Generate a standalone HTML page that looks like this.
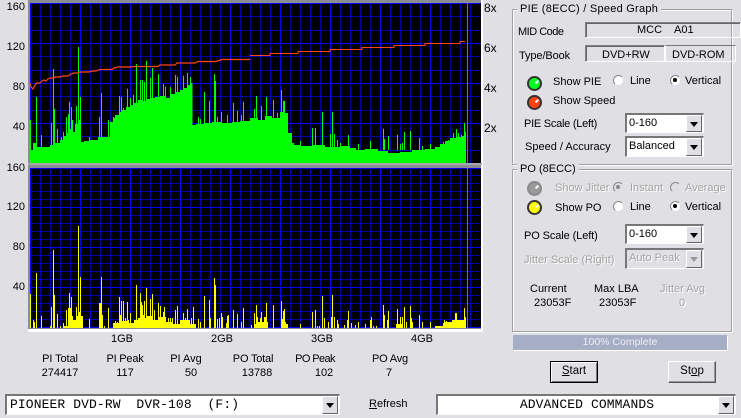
<!DOCTYPE html>
<html><head><meta charset="utf-8"><style>
html,body{margin:0;padding:0}
body{width:741px;height:418px;overflow:hidden;background:#e0dfe3;position:relative;font-family:"Liberation Sans",Arial,sans-serif;font-size:11px;color:#000}
.t{position:absolute;white-space:pre;line-height:14px;height:14px}
.c{transform:translateX(-50%)}
.d{color:#a3a3a3;text-shadow:1px 1px 0 #fff}
.ax{font-size:11px;text-align:right;width:24px;left:1px}
.gb{position:absolute;border:1px solid #a0a0a4;box-shadow:1px 1px 0 #fff,inset 1px 1px 0 #fff}
.lg{position:absolute;background:#e0dfe3;padding:0 3px;line-height:14px;white-space:pre}
.f{position:absolute;border:1px solid;border-color:#808080 #fff #fff #808080;box-shadow:inset 1px 1px 0 #666;box-sizing:border-box}
.sel{position:absolute;background:#fff;box-sizing:border-box;border-top:2px solid #777;border-left:2px solid #777;border-right:1px solid #fff;border-bottom:1px solid #fff;padding-left:2px;line-height:17px;font-size:11px}
.sel.dis{background:#e0dfe3;color:#a3a3a3;text-shadow:1px 1px 0 #fff}
.btn{position:absolute;box-sizing:border-box;background:#e0dfe3;border:1px solid;border-color:#fff #666 #666 #fff;right:1px;top:0;bottom:0;width:16px}
.btn:after{content:"";position:absolute;left:3px;top:6px;border:4px solid transparent;border-top:5px solid #000;border-bottom:0}
.dis .btn:after{border-top-color:#999}
.led{position:absolute;width:15px;height:15px;box-sizing:border-box;border-radius:50%;border:2px solid #333}
.led:after{content:"";position:absolute;left:6px;top:3px;width:4px;height:2px;background:#fff;transform:rotate(-45deg)}
.r{position:absolute;width:11px;height:11px;box-sizing:border-box;border-radius:50%;background:#fff;border:1px solid;border-color:#888 #e0dfe3 #e0dfe3 #888}
.r.on:after{content:"";position:absolute;left:2px;top:2px;width:4px;height:4px;border-radius:50%;background:#000}
.r.dm{background:#e0dfe3}
.r.dm.on:after{background:#888}
.b{position:absolute;box-sizing:border-box;background:#e0dfe3;text-align:center;font-size:11.5px;line-height:19px;border:1px solid;border-color:#fff #555 #555 #fff}
u{text-decoration:underline}
</style></head><body>
<svg width="483" height="332" style="position:absolute;left:0;top:0" xmlns="http://www.w3.org/2000/svg">
<rect x="28" y="0" width="455" height="332" fill="#fff"/>
<rect x="28" y="0" width="453" height="163" fill="#8c8c94"/>
<rect x="28" y="165" width="453" height="164" fill="#8c8c94"/>
<rect x="30" y="3" width="451" height="160" fill="#000"/>
<rect x="30" y="168" width="451" height="160" fill="#000"/>
<rect x="28" y="163" width="454" height="2" fill="#a8a8ac"/>
<path stroke="#0000a8" stroke-width="1" fill="none" d="M40.5 3V163M50.5 3V163M60.5 3V163M70.5 3V163M90.5 3V163M100.5 3V163M110.5 3V163M120.5 3V163M140.5 3V163M150.5 3V163M160.5 3V163M170.5 3V163M190.5 3V163M200.5 3V163M210.5 3V163M220.5 3V163M240.5 3V163M250.5 3V163M260.5 3V163M270.5 3V163M290.5 3V163M300.5 3V163M310.5 3V163M320.5 3V163M340.5 3V163M350.5 3V163M360.5 3V163M370.5 3V163M390.5 3V163M400.5 3V163M410.5 3V163M420.5 3V163M440.5 3V163M450.5 3V163M460.5 3V163M470.5 3V163
M30 16.5H481M30 30.5H481M30 56.5H481M30 70.5H481M30 96.5H481M30 110.5H481M30 136.5H481M30 150.5H481
M40.5 168V328M50.5 168V328M60.5 168V328M70.5 168V328M90.5 168V328M100.5 168V328M110.5 168V328M120.5 168V328M140.5 168V328M150.5 168V328M160.5 168V328M170.5 168V328M190.5 168V328M200.5 168V328M210.5 168V328M220.5 168V328M240.5 168V328M250.5 168V328M260.5 168V328M270.5 168V328M290.5 168V328M300.5 168V328M310.5 168V328M320.5 168V328M340.5 168V328M350.5 168V328M360.5 168V328M370.5 168V328M390.5 168V328M400.5 168V328M410.5 168V328M420.5 168V328M440.5 168V328M450.5 168V328M460.5 168V328M470.5 168V328
M30 175.5H481M30 183.5H481M30 191.5H481M30 199.5H481M30 215.5H481M30 223.5H481M30 231.5H481M30 239.5H481M30 255.5H481M30 263.5H481M30 271.5H481M30 279.5H481M30 295.5H481M30 303.5H481M30 311.5H481M30 319.5H481"/>
<path stroke="#0000ff" stroke-width="1" fill="none" d="M30.5 3V163M80.5 3V163M130.5 3V163M180.5 3V163M230.5 3V163M280.5 3V163M330.5 3V163M380.5 3V163M430.5 3V163M30 3.5H481M30 43.5H481M30 83.5H481M30 123.5H481
M30.5 168V328M80.5 168V328M130.5 168V328M180.5 168V328M230.5 168V328M280.5 168V328M330.5 168V328M380.5 168V328M430.5 168V328M30 168.5H481M30 207.5H481M30 247.5H481M30 287.5H481M30 327.5H481" />
<path fill="#00ff00" d="M30 163V120H31V150H33V143H36V147H50V145H53V143H60V140H64V136H67V133H70V129H72V132H75V124H78V142H84V141H90V140H98V137H110V122H113V118H116V115H119V112H122V110H126V107H130V105H134V103H138V100H142V101H146V99H150V98H155V97H160V96H165V98H170V94H175V92H180V90H184V88H188V85H191V83H192.5V125H196V124H205V123H212V122H222V123H232V122H240V121H250V118H258V120H265V116H272V118H280V112H284V113H288V133H292V143H294V145H300V146H312V145H325V147H340V146H350V148H356V150H365V149H378V151H388V153H400V152H412V150H425V149H435V147H440V144H445V141H450V138H456V137H462V136H466V163Z"/>
<path stroke="#00ff00" stroke-width="1" fill="none" d="M36.5 97V150M41.5 135V150M51.5 123V150M53.5 69V150M54.5 109V150M57.5 129V150M61.5 137V150M63.5 132V150M66.5 117V150M68.5 114V150M69.5 102V150M71.5 107V150M72.5 120V150M76.5 106V150M78.5 47V150M79.5 120V150M80.5 97V150M89.5 137V150M99.5 117V150M101.5 93V150M103.5 137V150M108.5 120V150M113.5 117V150M115.5 115V150M119.5 96V150M121.5 97V150M123.5 108V150M127.5 89V150M130.5 98V150M133.5 95V150M136.5 64V150M140.5 80V150M142.5 80V150M144.5 82V150M146.5 61V150M150.5 78V150M152.5 68V150M158.5 74V150M163.5 84V150M165.5 87V150M170.5 87V150M175.5 75V150M177.5 77V150M183.5 76V150M187.5 73V150M190.5 77V150M198.5 117V150M200.5 119V150M204.5 92V150M209.5 101V150M214.5 74V150M215.5 81V150M217.5 117V150M221.5 112V150M227.5 115V150M233.5 103V150M237.5 111V150M241.5 115V150M243.5 102V150M254.5 109V150M256.5 96V150M261.5 106V150M266.5 97V150M273.5 100V150M277.5 113V150M281.5 90V150M283.5 101V150M284.5 101V150M300.5 141V150M312.5 128V150M315.5 128V150M322.5 112V150M330.5 134V150M332.5 112V150M334.5 134V150M337.5 140V150M340.5 143V150M348.5 135V150M358.5 144V150M370.5 141V150M383.5 129V150M384.5 139V150M388.5 136V150M397.5 135V150M400.5 144V150M402.5 143V150M404.5 132V150M410.5 131V150M419.5 138V150M422.5 146V150M430.5 144V150M443.5 142V150M448.5 140V150M453.5 133V150M456.5 129V150M458.5 133V150M461.5 135V150M464.5 123V150M465.5 132V150"/>
<path fill="#ffff00" d="M30 328H64V326H68V320H76V316H83V328H113V323H120V321H128V323H134V320H138V318H146V316H152V320H158V317H166V322H172V324H180V320H190V324H196V328H254V324H258V322H268V328H284V324H288V328H396V324H402V328H436V326H444V322H452V320H466V328Z"/>
<path stroke="#ffff00" stroke-width="1" fill="none" d="M30.5 294V328M33.5 320V328M34.5 322V328M36.5 273V328M41.5 316V328M50.5 326V328M51.5 307V328M53.5 250V328M54.5 295V328M57.5 314V328M60.5 326V328M63.5 323V328M66.5 310V328M68.5 308V328M69.5 293V328M70.5 308V328M71.5 297V328M72.5 316V328M73.5 320V328M76.5 307V328M77.5 316V328M78.5 226V328M79.5 312V328M80.5 277V328M81.5 322V328M82.5 324V328M89.5 319V328M99.5 303V328M100.5 303V328M101.5 277V328M102.5 315V328M104.5 326V328M108.5 308V328M113.5 323V328M115.5 321V328M117.5 322V328M119.5 297V328M120.5 315V328M121.5 301V328M123.5 301V328M125.5 318V328M127.5 302V328M128.5 320V328M130.5 313V328M133.5 324V328M136.5 285V328M138.5 323V328M140.5 293V328M141.5 302V328M142.5 305V328M143.5 315V328M144.5 301V328M145.5 320V328M146.5 288V328M148.5 318V328M150.5 299V328M152.5 294V328M154.5 310V328M156.5 320V328M158.5 303V328M160.5 306V328M163.5 312V328M164.5 307V328M166.5 322V328M168.5 318V328M170.5 318V328M172.5 318V328M175.5 310V328M177.5 306V328M180.5 325V328M183.5 313V328M185.5 318V328M187.5 309V328M189.5 320V328M191.5 318V328M193.5 307V328M198.5 319V328M200.5 322V328M204.5 296V328M209.5 300V328M210.5 318V328M214.5 278V328M215.5 285V328M217.5 319V328M219.5 318V328M221.5 313V328M222.5 317V328M226.5 323V328M227.5 316V328M228.5 315V328M233.5 310V328M237.5 314V328M241.5 322V328M243.5 308V328M251.5 325V328M254.5 313V328M256.5 305V328M257.5 317V328M260.5 318V328M261.5 312V328M264.5 317V328M265.5 317V328M266.5 303V328M273.5 305V328M281.5 301V328M282.5 319V328M283.5 311V328M284.5 309V328M285.5 322V328M300.5 324V328M312.5 312V328M315.5 310V328M317.5 326V328M319.5 326V328M322.5 296V328M324.5 318V328M328.5 322V328M331.5 317V328M332.5 295V328M334.5 317V328M337.5 320V328M338.5 324V328M344.5 325V328M347.5 320V328M348.5 311V328M351.5 323V328M355.5 325V328M358.5 322V328M365.5 324V328M370.5 320V328M371.5 317V328M373.5 326V328M376.5 326V328M383.5 305V328M384.5 315V328M387.5 320V328M388.5 311V328M397.5 309V328M398.5 325V328M400.5 317V328M402.5 317V328M404.5 307V328M406.5 322V328M410.5 306V328M411.5 318V328M412.5 322V328M419.5 315V328M422.5 322V328M430.5 322V328M435.5 326V328M437.5 326V328M443.5 323V328M444.5 320V328M446.5 321V328M448.5 322V328M450.5 322V328M452.5 321V328M453.5 320V328M455.5 313V328M456.5 313V328M457.5 320V328M459.5 321V328M461.5 322V328M462.5 320V328M464.5 308V328M465.5 317V328"/>
<path stroke="#ff4010" stroke-width="1" fill="none" d="M467.5 3V163M467.5 168V328"/>
<path stroke="#ff4810" stroke-width="1.2" fill="none" d="M30 83L31 87L33 89L35 85L37 83H40L42 81L44 80L46 81L48 79L50 78H53L56 77H60L63 76H68L71 74L74 73H78L80 72H89L92 71H96L100 69.5H112L114 68L118 67H130L135 66.5H158L160 65H175L177 63H195L198 61.5H216L222 59.5H250"/>
<path stroke="#ff4810" stroke-width="1" fill="none" d="M250 55.5H270V53.5H298V51.5H330V49.5H362V47.5H394V45.5H425V43.5H460V41.5H465" shape-rendering="crispEdges"/>
<rect x="28" y="329" width="455" height="3" fill="#fff"/>
</svg>

<div class="t ax" style="top:0">160</div><div class="t ax" style="top:40px">120</div><div class="t ax" style="top:80px">80</div><div class="t ax" style="top:120px">40</div>
<div class="t ax" style="top:161px">160</div><div class="t ax" style="top:200px">120</div><div class="t ax" style="top:240px">80</div><div class="t ax" style="top:280px">40</div>
<div class="t" style="left:484px;top:1px;font-size:12px">8x</div><div class="t" style="left:484px;top:41px;font-size:12px">6x</div><div class="t" style="left:484px;top:81px;font-size:12px">4x</div><div class="t" style="left:484px;top:121px;font-size:12px">2x</div>

<div class="t c" style="left:122px;top:332px">1GB</div><div class="t c" style="left:222px;top:332px">2GB</div><div class="t c" style="left:322px;top:332px">3GB</div><div class="t c" style="left:422px;top:332px">4GB</div>
<div class="t c" style="left:60px;top:352px;letter-spacing:-.1px">PI Total</div><div class="t c" style="left:60px;top:366px">274417</div>
<div class="t c" style="left:125px;top:352px;letter-spacing:-.2px">PI Peak</div><div class="t c" style="left:125px;top:366px">117</div>
<div class="t c" style="left:186px;top:352px">PI Avg</div><div class="t c" style="left:191px;top:366px">50</div>
<div class="t c" style="left:253px;top:352px;letter-spacing:-.2px">PO Total</div><div class="t c" style="left:257px;top:366px">13788</div>
<div class="t c" style="left:315px;top:352px;letter-spacing:-.6px">PO Peak</div><div class="t c" style="left:324px;top:366px">102</div>
<div class="t c" style="left:390px;top:352px;letter-spacing:-.2px">PO Avg</div><div class="t c" style="left:389px;top:366px">7</div>

<div class="gb" style="left:512px;top:9px;width:218px;height:154px"></div>
<div class="lg" style="left:517px;top:2px;letter-spacing:.25px">PIE (8ECC) / Speed Graph</div>
<div class="t" style="left:518px;top:25px;letter-spacing:-.5px">MID Code</div>
<div class="f" style="left:585px;top:22px;width:156px;height:16px"></div>
<div class="t" style="left:637px;top:23px">MCC</div><div class="t" style="left:674px;top:23px">A01</div>
<div class="t" style="left:519px;top:49px;letter-spacing:-.1px">Type/Book</div>
<div class="f" style="left:585px;top:45px;width:80px;height:17px"></div>
<div class="f" style="left:665px;top:45px;width:71px;height:17px;box-shadow:none;border-color:#777 #fff #fff #fff"></div>
<div class="t" style="left:602px;top:48px">DVD+RW</div><div class="t" style="left:672px;top:48px">DVD-ROM</div>
<div class="led" style="left:527px;top:76px;background:#00ff20"></div>
<div class="t" style="left:553px;top:75px">Show PIE</div>
<div class="r" style="left:613px;top:75px"></div><div class="t" style="left:630px;top:74px">Line</div>
<div class="r on" style="left:670px;top:75px"></div><div class="t" style="left:685px;top:74px">Vertical</div>
<div class="led" style="left:527px;top:95px;background:#ff4010"></div>
<div class="t" style="left:553px;top:94px">Show Speed</div>
<div class="t" style="left:524px;top:117px;letter-spacing:-.25px">PIE Scale (Left)</div>
<div class="sel" style="left:625px;top:113px;width:79px;height:20px">0-160<div class="btn"></div></div>
<div class="t" style="left:525px;top:140px">Speed / Accuracy</div>
<div class="sel" style="left:625px;top:136px;width:79px;height:21px">Balanced<div class="btn"></div></div>

<div class="gb" style="left:512px;top:169px;width:218px;height:161px"></div>
<div class="lg" style="left:517px;top:162px">PO (8ECC)</div>
<div class="led" style="left:527px;top:181px;background:#9a9a9a;border-color:#8a8a8a"></div>
<div class="t d" style="left:555px;top:181px">Show Jitter</div>
<div class="r dm on" style="left:613px;top:182px"></div><div class="t d" style="left:630px;top:181px">Instant</div>
<div class="r dm" style="left:670px;top:182px"></div><div class="t d" style="left:685px;top:181px">Average</div>
<div class="led" style="left:527px;top:200px;background:#ffff00"></div>
<div class="t" style="left:555px;top:201px">Show PO</div>
<div class="r" style="left:613px;top:201px"></div><div class="t" style="left:630px;top:200px">Line</div>
<div class="r on" style="left:670px;top:201px"></div><div class="t" style="left:685px;top:200px">Vertical</div>
<div class="t" style="left:524px;top:229px;letter-spacing:-.1px">PO Scale (Left)</div>
<div class="sel" style="left:625px;top:224px;width:79px;height:20px">0-160<div class="btn"></div></div>
<div class="t d" style="left:524px;top:253px">Jitter Scale (Right)</div>
<div class="sel dis" style="left:625px;top:248px;width:79px;height:21px">Auto Peak<div class="btn"></div></div>
<div class="t" style="left:530px;top:282px">Current</div><div class="t" style="left:594px;top:282px">Max LBA</div><div class="t d" style="left:660px;top:282px">Jitter Avg</div>
<div class="t" style="left:534px;top:296px">23053F</div><div class="t" style="left:599px;top:296px">23053F</div><div class="t d" style="left:679px;top:296px">0</div>

<div style="position:absolute;left:513px;top:335px;width:214px;height:15px;background:#a6aec6;color:#eceef4;text-align:center;line-height:15px;font-size:10.5px;box-shadow:1px 1px 0 #fff">100% Complete</div>
<div class="b" style="left:550px;top:361px;width:48px;height:22px;border:1px solid #000;box-shadow:inset 1px 1px 0 #fff,inset -1px -1px 0 #777"><u>S</u>tart</div>
<div class="b" style="left:668px;top:361px;width:48px;height:22px;box-shadow:inset -1px -1px 0 #999">St<u>o</u>p</div>

<div class="sel" style="left:5px;top:394px;width:335px;height:21px;font-family:'Liberation Mono',monospace;font-size:13px;letter-spacing:.1px;white-space:pre;padding-left:3px">PIONEER DVD-RW  DVR-108  (F:)<div class="btn"></div></div>
<div class="t" style="left:369px;top:397px"><u>R</u>efresh</div>
<div class="sel" style="left:436px;top:394px;width:300px;height:21px;font-family:'Liberation Mono',monospace;font-size:13px;letter-spacing:.1px;text-align:center;white-space:pre;padding-right:1px">ADVANCED COMMANDS<div class="btn"></div></div>
</body></html>
